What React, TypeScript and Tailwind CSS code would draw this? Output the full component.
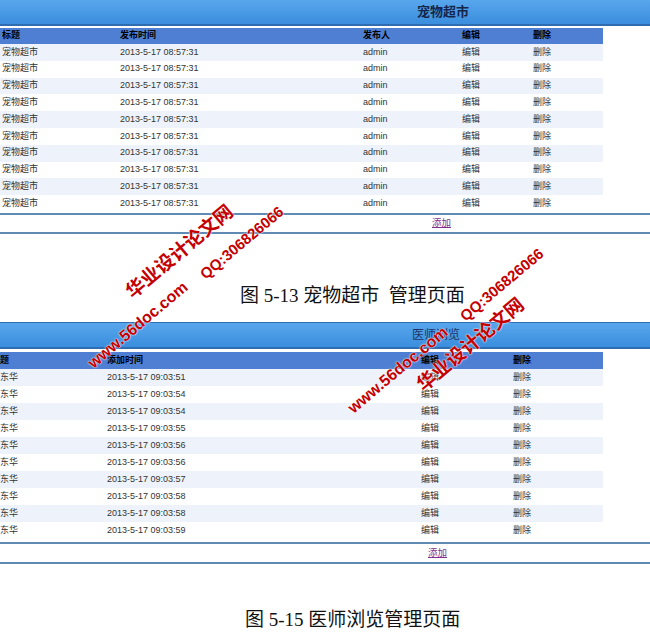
import React from 'react'

type Row = string[]

const petRows: Row[] = Array.from({ length: 10 }, () => ['宠物超市', '2013-5-17 08:57:31', 'admin', '编辑', '删除'])

const doctorTimes = ['51', '54', '54', '55', '56', '56', '57', '58', '58', '59']
const doctorRows: Row[] = doctorTimes.map((s) => ['东华', `2013-5-17 09:03:${s}`, '编辑', '删除'])

const font = "font-['Liberation_Sans','Noto_Sans_CJK_SC',sans-serif]"

function Watermark({ text, x, y, size }: { text: string; x: number; y: number; size: string }) {
  return (
    <span
      className={`absolute -translate-x-1/2 -translate-y-1/2 -rotate-[40deg] whitespace-nowrap font-bold text-[#c40000] [text-shadow:0_0_2px_#fff,0_0_1px_#fff] ${font} ${size}`}
      style={{ left: x, top: y }}
    >
      {text}
    </span>
  )
}

export default function App() {
  return (
    <div className={`relative w-[650px] h-[633px] overflow-hidden bg-white ${font}`}>
      {/* ── 宠物超市 ── */}
      <section>
        <div className="h-[26px] flex items-center pl-[417px] bg-gradient-to-b from-[#58a6ec] to-[#3a8ede] border-b-2 border-[#2f6cb0]">
          <span className="text-[13px] font-bold text-[#14264a]">宠物超市</span>
        </div>
        <div className="mt-[2px] w-[603px]">
          <div className="grid grid-cols-[120px_243px_99px_71px_70px] h-[16px] items-center bg-[#4f7fd2] text-[9px] font-bold text-black">
            <span className="pl-[2px]">标题</span>
            <span>发布时间</span>
            <span>发布人</span>
            <span>编辑</span>
            <span>删除</span>
          </div>
          {petRows.map((r, i) => (
            <div
              key={i}
              className={`grid grid-cols-[120px_243px_99px_71px_70px] h-[16.8px] items-center text-[9px] text-[#333] ${
                i % 2 === 0 ? 'bg-[#eef3fb]' : 'bg-white'
              }`}
            >
              <span className="pl-[2px]">{r[0]}</span>
              <span>{r[1]}</span>
              <span>{r[2]}</span>
              <span>{r[3]}</span>
              <span>{r[4]}</span>
            </div>
          ))}
        </div>
        <div className="mt-[1px] h-[21px] flex items-center pl-[432px] border-y-2 border-[#6089b4]">
          <a className="text-[9.5px] text-[#80318f] underline">添加</a>
        </div>
      </section>

      <p className="mt-[51px] h-[22px] leading-[22px] pl-[240px] text-[19px] text-[#111] font-['Liberation_Serif','Noto_Sans_CJK_SC',serif] whitespace-pre">
        图 5-13 宠物超市  管理页面
      </p>

      {/* ── 医师浏览 ── */}
      <section className="mt-[15px]">
        <div className="h-[27px] flex items-center pl-[412px] bg-gradient-to-b from-[#58a6ec] to-[#3a8ede] border-t border-b-2 border-[#2f6cb0]">
          <span className="text-[12px] text-[#1d3566]">医师浏览</span>
        </div>
        <div className="mt-[3px] w-[603px]">
          <div className="grid grid-cols-[107px_314px_92px_90px] h-[17px] items-center bg-[#4f7fd2] text-[9px] font-bold text-black">
            <span className="-ml-[9px]">标题</span>
            <span>添加时间</span>
            <span>编辑</span>
            <span>删除</span>
          </div>
          {doctorRows.map((r, i) => (
            <div
              key={i}
              className={`grid grid-cols-[107px_314px_92px_90px] h-[17px] items-center text-[9px] text-[#333] ${
                i % 2 === 0 ? 'bg-[#eef3fb]' : 'bg-white'
              }`}
            >
              <span>{r[0]}</span>
              <span>{r[1]}</span>
              <span>{r[2]}</span>
              <span>{r[3]}</span>
            </div>
          ))}
        </div>
        <div className="mt-[3px] h-[22px] flex items-center pl-[428px] border-y-2 border-[#6089b4]">
          <a className="text-[9.5px] text-[#80318f] underline">添加</a>
        </div>
      </section>

      <p className="mt-[45px] h-[22px] leading-[22px] pl-[245px] text-[19px] text-[#111] font-['Liberation_Serif','Noto_Sans_CJK_SC',serif] whitespace-pre">
        图 5-15 医师浏览管理页面
      </p>

      {/* watermarks */}
      <Watermark text="华业设计论文网" x={180} y={252} size="text-[19px]" />
      <Watermark text="QQ:306826066" x={242} y={243} size="text-[15px]" />
      <Watermark text="www.56doc.com" x={138} y={325} size="text-[16px]" />
      <Watermark text="QQ:306826066" x={502} y={285} size="text-[15px]" />
      <Watermark text="华业设计论文网" x={471} y={345} size="text-[19px]" />
      <Watermark text="www.56doc.com" x={398} y={370} size="text-[16px]" />
    </div>
  )
}
